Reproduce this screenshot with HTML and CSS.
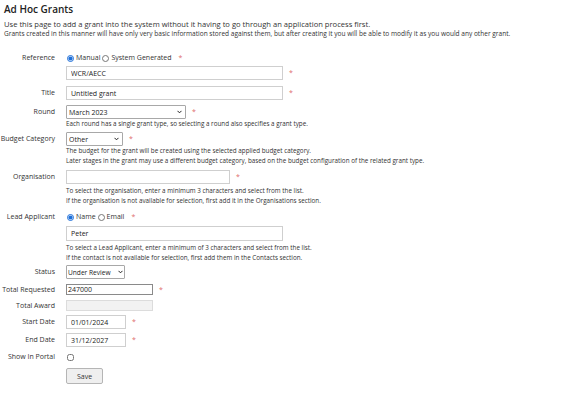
FILE: index.html
```html
<!DOCTYPE html>
<html lang="en">
<head>
    <meta charset="UTF-8">
    <title>Ad Hoc Grants</title>
    <link rel="stylesheet" href="styles.css">
</head>
<body>
    <h1>Ad Hoc Grants</h1>
    <div class="intro">
        <p class="intro-first">Use this page to add a grant into the system without it having to go through an application process first.</p>
        <p class="intro-second">Grants created in this manner will have only very basic information stored against them, but after creating it you will be able to modify it as you would any other grant.</p>
    </div>

    <form class="grant-form" onsubmit="return false;">
        <div class="form-row h12 mb2">
            <label class="form-label">Reference</label>
            <div class="form-field">
                <div class="field-line">
                    <input type="radio" name="ref" checked><span class="radio-text">Manual</span>
                    <input type="radio" name="ref"><span class="radio-text">System Generated</span>
                    <span class="req">*</span>
                </div>
            </div>
        </div>
        <div class="form-row h14 mb6">
            <label class="form-label"></label>
            <div class="form-field">
                <div class="field-line">
                    <input type="text" class="text-input w-wide" value="WCR/AECC">
                    <span class="req">*</span>
                </div>
            </div>
        </div>
        <div class="form-row h14 mb5">
            <label class="form-label">Title</label>
            <div class="form-field">
                <div class="field-line">
                    <input type="text" class="text-input w-wide" value="Untitled grant">
                    <span class="req">*</span>
                </div>
            </div>
        </div>
        <div class="form-row h14 mb3">
            <label class="form-label">Round</label>
            <div class="form-field">
                <div class="field-line">
                    <span class="select-wrap">
                        <select class="select-input w-round"><option>March 2023</option></select>
                        <svg class="chevron" viewBox="0 0 6 4"><path d="M0.6 0.6 L3 3 L5.4 0.6" fill="none" stroke="#222" stroke-width="1.2"/></svg>
                    </span>
                    <span class="req">*</span>
                </div>
                <div class="help">Each round has a single grant type, so selecting a round also specifies a grant type.</div>
            </div>
        </div>
        <div class="form-row h14 mb4">
            <label class="form-label">Budget Category</label>
            <div class="form-field">
                <div class="field-line">
                    <span class="select-wrap">
                        <select class="select-input w-budget"><option>Other</option></select>
                        <svg class="chevron" viewBox="0 0 6 4"><path d="M0.6 0.6 L3 3 L5.4 0.6" fill="none" stroke="#222" stroke-width="1.2"/></svg>
                    </span>
                    <span class="req">*</span>
                </div>
                <div class="help">The budget for the grant will be created using the selected applied budget category.</div>
                <div class="help">Later stages in the grant may use a different budget category, based on the budget configuration of the related grant type.</div>
            </div>
        </div>
        <div class="form-row h14 mb5">
            <label class="form-label">Organisation</label>
            <div class="form-field">
                <div class="field-line">
                    <input type="text" class="text-input w-org" value="">
                    <span class="req">*</span>
                </div>
                <div class="help mt1">To select the organisation, enter a minimum 3 characters and select from the list.</div>
                <div class="help">If the organisation is not available for selection, first add it in the Organisations section.</div>
            </div>
        </div>
        <div class="form-row h12 mb3">
            <label class="form-label">Lead Applicant</label>
            <div class="form-field">
                <div class="field-line">
                    <input type="radio" name="lead" checked><span class="radio-text">Name</span>
                    <input type="radio" name="lead"><span class="radio-text">Email</span>
                    <span class="req">*</span>
                </div>
            </div>
        </div>
        <div class="form-row h15 mb2">
            <label class="form-label"></label>
            <div class="form-field">
                <div class="field-line">
                    <input type="text" class="text-input w-wide" value="Peter">
                </div>
                <div class="help mt1">To select a Lead Applicant, enter a minimum of 3 characters and select from the list.</div>
                <div class="help">If the contact is not available for selection, first add them in the Contacts section.</div>
            </div>
        </div>
        <div class="form-row h14 mb5">
            <label class="form-label">Status</label>
            <div class="form-field">
                <div class="field-line">
                    <span class="select-wrap select-tight">
                        <select class="select-input w-status"><option>Under Review</option></select>
                        <svg class="chevron" viewBox="0 0 6 4"><path d="M0.6 0.6 L3 3 L5.4 0.6" fill="none" stroke="#222" stroke-width="1.2"/></svg>
                    </span>
                </div>
            </div>
        </div>
        <div class="form-row h11 mb5">
            <label class="form-label">Total Requested</label>
            <div class="form-field">
                <div class="field-line">
                    <input type="text" class="plain-input w-amount" value="247000">
                    <span class="req">*</span>
                </div>
            </div>
        </div>
        <div class="form-row h11 mb4">
            <label class="form-label">Total Award</label>
            <div class="form-field">
                <div class="field-line">
                    <input type="text" class="plain-input disabled w-amount" value="" disabled>
                </div>
            </div>
        </div>
        <div class="form-row h14 mb4">
            <label class="form-label">Start Date</label>
            <div class="form-field">
                <div class="field-line">
                    <input type="text" class="text-input w-date" value="01/01/2024">
                    <span class="req">*</span>
                </div>
            </div>
        </div>
        <div class="form-row h14 mb4">
            <label class="form-label">End Date</label>
            <div class="form-field">
                <div class="field-line">
                    <input type="text" class="text-input w-date" value="31/12/2027">
                    <span class="req">*</span>
                </div>
            </div>
        </div>
        <div class="form-row h12 mb5">
            <label class="form-label">Show In Portal</label>
            <div class="form-field">
                <div class="field-line">
                    <input type="checkbox" class="check">
                </div>
            </div>
        </div>
        <div class="form-row h16">
            <label class="form-label"></label>
            <div class="form-field">
                <div class="field-line">
                    <button type="submit" class="save-btn">Save</button>
                </div>
            </div>
        </div>
    </form>
</body>
</html>
```

FILE: styles.css
```css
body {
    font-family: 'Open Sans', 'Noto Sans', sans-serif;
    font-size: 7px;
    color: #333;
    margin: 0;
    padding: 0 4px;
    background-color: #ffffff;
}
h1 {
    margin: 3px 0 0;
    font-size: 10px;
    line-height: 13px;
    font-weight: 600;
    color: #222;
}
.intro {
    margin-top: 3px;
}
.intro p {
    margin: 0;
    line-height: 10px;
    white-space: nowrap;
}
.intro-first {
    font-size: 7.6px;
}
.intro-second {
    font-size: 6.55px;
}
.grant-form {
    margin-top: 13px;
    margin-left: -4px;
}
.form-row {
    display: flex;
    align-items: flex-start;
}
.form-label {
    width: 55px;
    margin-right: 11px;
    text-align: right;
    white-space: nowrap;
}
.form-field {
    flex: 1;
}
.field-line {
    display: flex;
    align-items: center;
}
.h11 .form-label, .h11 .field-line { height: 11px; line-height: 11px; }
.h12 .form-label, .h12 .field-line { height: 12px; line-height: 12px; }
.h14 .form-label, .h14 .field-line { height: 14px; line-height: 14px; }
.h15 .form-label, .h15 .field-line { height: 15px; line-height: 15px; }
.h16 .form-label, .h16 .field-line { height: 16px; line-height: 16px; }
.mb2 { margin-bottom: 2px; }
.mb3 { margin-bottom: 3px; }
.mb4 { margin-bottom: 4px; }
.mb5 { margin-bottom: 5px; }
.mb6 { margin-bottom: 6px; }
.mt1 { margin-top: 2px; }
.help {
    line-height: 10px;
    font-size: 6.3px;
    white-space: nowrap;
}
.req {
    color: #e06c6c;
    margin-left: 6px;
    font-size: 7px;
}
input[type="radio"] {
    width: 7px;
    height: 7px;
    margin: 0 2px 0 1px;
    accent-color: #1e6fd9;
}
.radio-text {
    margin-right: 1px;
}
.text-input, .select-input, .plain-input {
    font-family: 'Open Sans', 'Noto Sans', sans-serif;
    font-size: 7px;
    color: #222;
    box-sizing: border-box;
    margin: 0;
    border-radius: 0;
}
.text-input {
    height: 14px;
    padding: 0 4px;
    border: 1px solid #cfcfcf;
}
.h15 .text-input {
    height: 15px;
}
.select-wrap {
    position: relative;
    display: inline-flex;
}
.select-input {
    appearance: none;
    -webkit-appearance: none;
    height: 14px;
    padding: 0 2px;
    border: 1px solid #a8a8a8;
    border-radius: 1px;
    background-color: #fff;
}
.chevron {
    position: absolute;
    right: 4px;
    top: 5px;
    width: 5px;
    height: 4px;
    pointer-events: none;
}
.select-tight .select-input {
    padding: 0 1px;
    font-size: 6.6px;
}
.select-tight .chevron {
    right: 2px;
}
.plain-input {
    height: 11px;
    padding: 0 1px;
    border: 1px solid #8a8a8a;
}
.plain-input.disabled {
    background-color: #f2f2f2;
    border-color: #dcdcdc;
}
.w-wide { width: 217px; }
.w-org { width: 164px; }
.w-round { width: 120px; }
.w-budget { width: 57px; }
.w-status { width: 59px; }
.w-amount { width: 87px; }
.w-date { width: 60px; }
.check {
    width: 7px;
    height: 7px;
    margin: 0 0 0 1px;
}
.save-btn {
    width: 37px;
    height: 16px;
    padding: 0;
    font-family: 'Open Sans', 'Noto Sans', sans-serif;
    font-size: 7px;
    color: #333;
    background-color: #efefef;
    border: 1px solid #b5b5b5;
    border-radius: 2px;
}
```
